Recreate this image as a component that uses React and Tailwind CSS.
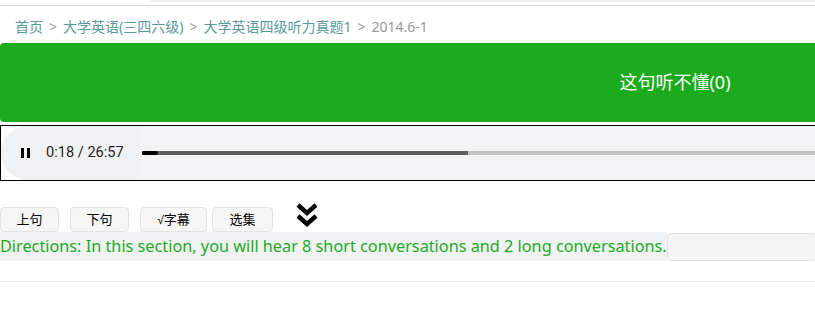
import React from "react";

const cjk = { fontFamily: '"Noto Sans", "Noto Sans CJK SC", sans-serif' };

function Chevrons() {
  return (
    <svg width="24" height="25" viewBox="0 0 24 25" className="block">
      <path d="M3 2 L12 10 L21 2" fill="none" stroke="#000" strokeWidth="4.4" strokeLinejoin="miter" />
      <path d="M3 13 L12 21 L21 13" fill="none" stroke="#000" strokeWidth="4.4" strokeLinejoin="miter" />
    </svg>
  );
}

function Btn({ children, w }) {
  return (
    <div
      className={`h-[25px] ${w} flex items-center justify-center rounded-[4px] border border-[#e3e3e3] bg-[#f6f6f6] text-[13px] text-black`}
      style={cjk}
    >
      {children}
    </div>
  );
}

export default function App() {
  return (
    <div className="w-[815px] h-[311px] overflow-hidden bg-white relative" style={cjk}>
      <div className="h-[6px] border-b border-[#dcdcdc] flex">
        <div className="w-[150px]" />
        <div className="flex-1 h-[2px] bg-[#f0f0f0]" />
      </div>
      <div className="h-[37px] pl-[15px] pt-[11px] text-[14px] leading-[19px] flex gap-[6px]">
        <span className="text-[#5a9a9c]">首页</span>
        <span className="text-[#999]">&gt;</span>
        <span className="text-[#5a9a9c]">大学英语(三四六级)</span>
        <span className="text-[#999]">&gt;</span>
        <span className="text-[#5a9a9c]">大学英语四级听力真题1</span>
        <span className="text-[#999]">&gt;</span>
        <span className="text-[#999]">2014.6-1</span>
      </div>
      <div className="w-[1350px] h-[79px] rounded-[4px] bg-[#1bab1c] flex items-center justify-center text-white text-[18px]">
        这句听不懂(0)
      </div>
      <div className="mt-[3px] w-[830px] h-[56px] border border-black bg-white">
        <div className="h-full rounded-l-[27px] bg-[#f1f3f4] flex items-center">
          <div className="w-[141px] h-full rounded-l-[27px] bg-[#eff1f3] flex items-center pl-[20px]">
            <div className="flex gap-[3px] mr-[16px]">
              <div className="w-[3px] h-[10px] bg-black" />
              <div className="w-[3px] h-[10px] bg-black" />
            </div>
            <span className="text-[14.6px] text-[#1f1f1f]" style={{ fontFamily: "Roboto, sans-serif" }}>
              0:18 / 26:57
            </span>
          </div>
          <div className="flex-1 h-[4px] bg-[#c2c2c2] relative">
            <div className="absolute left-0 top-0 h-[4px] w-[326px] bg-[#5e5e5e]" />
            <div className="absolute left-0 top-0 h-[4px] w-[16px] rounded-full bg-black" />
          </div>
        </div>
      </div>
      <div className="mt-[21px] flex items-end h-[30px]">
        <div className="flex gap-[11px]">
          <Btn w="w-[59px]">上句</Btn>
          <Btn w="w-[59px]">下句</Btn>
        </div>
        <div className="ml-[11px] flex gap-[5px]">
          <Btn w="w-[67px]">
            <span style={{ fontFamily: '"Liberation Sans", sans-serif' }} className="text-[12px]">√</span>
            字幕
          </Btn>
          <Btn w="w-[61px]">选集</Btn>
        </div>
        <div className="ml-[22px] self-start mt-[1px]">
          <Chevrons />
        </div>
      </div>
      <div className="flex h-[29px]">
        <div className="bg-[#f0f2f4] text-[#1bab1c] text-[16.25px] leading-[29px] whitespace-nowrap">
          Directions: In this section, you will hear 8 short conversations and 2 long conversations.
        </div>
        <div className="flex-1 mt-[1px] h-[28px] rounded-[4px] border border-[#e3e3e3] bg-[#f5f5f5] min-w-[150px]" />
      </div>
      <div className="mt-[20px] h-px bg-[#ececec]" />
    </div>
  );
}
